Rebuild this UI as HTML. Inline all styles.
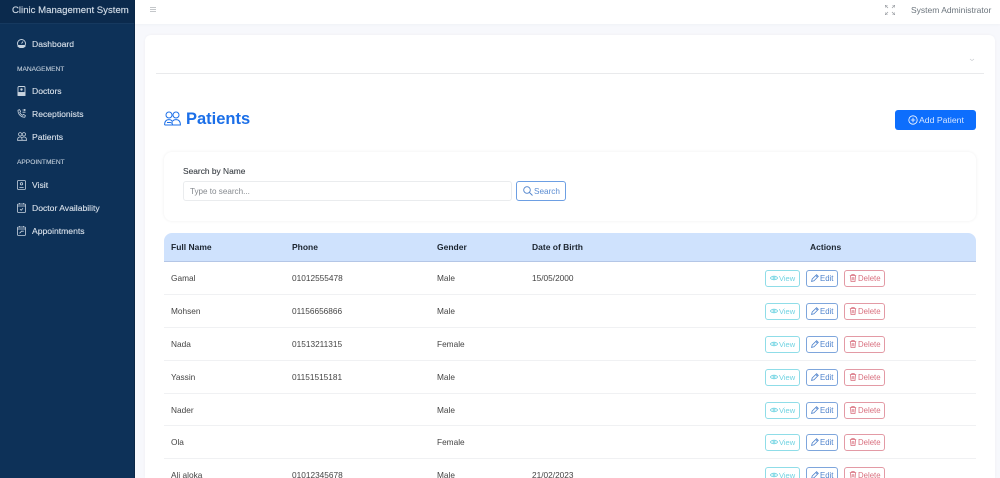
<!DOCTYPE html>
<html style="width:1000px;height:478px;overflow:hidden"><head><meta charset="utf-8"><style>
*{box-sizing:border-box}
html,body{margin:0;padding:0}
body{width:1000px;height:478px;overflow:hidden;position:relative;background:#f7f8fc;font-family:"Liberation Sans",sans-serif;font-size:9px;color:#333}
.a{position:absolute;white-space:nowrap}
.nav{color:#dbe3ec;font-size:8.6px;line-height:12px;left:32px;-webkit-text-stroke:.1px #dbe3ec}
.sec{color:#c4d0dc;font-size:6.6px;line-height:10px;left:17px;-webkit-text-stroke:.1px #c4d0dc}
svg{position:absolute;fill:none}
.td{line-height:12px;color:#444;font-size:8.3px}
.th{line-height:12px;color:#1c2530;font-weight:bold;font-size:8.5px}
.btn{position:absolute;height:17px;border:1px solid;border-radius:3px;font-size:7.8px;line-height:15px;background:#fff;white-space:nowrap}
.btn span{position:absolute;top:0}
.v{left:765px;width:35px;border-color:#8fdde8;color:#6fd3e2;font-size:7.5px}
.e{left:806px;width:32px;border-color:#7ea6dc;color:#4f83cc}
.d{left:844px;width:41px;border-color:#e39aa5;color:#d9707f}
.line{position:absolute;left:164px;width:812px;height:1px;background:#f0f1f3}
</style></head><body>
<div class="a" style="left:0;top:0;width:135px;height:478px;background:#0d3158;border-right:1px solid #0a2747"></div>
<div class="a" style="left:0;top:0;width:134px;height:24px;background:#0b2a4d;border-bottom:1px solid #16395f"></div>
<div class="a" style="left:12px;top:4px;line-height:13px;font-size:9.6px;color:#d3dde8;-webkit-text-stroke:.15px #d3dde8">Clinic Management System</div>
<div class="a" style="left:135px;top:0;width:865px;height:24px;background:#fff;box-shadow:0 1px 3px rgba(0,0,0,.03)"></div>
<svg style="left:150px;top:7px" width="6" height="5" stroke="#c4c7ca" stroke-width="1"><path d="M0 .5H6M0 2.5H6M0 4.5H6"/></svg>
<svg style="left:885px;top:5px" width="10" height="10" stroke="#9ca0a5" stroke-width=".8"><path d="M0 3V0H3M7 0H10V3M10 7V10H7M3 10H0V7M0 0L3 3M10 0L7 3M10 10L7 7M0 10L3 7"/></svg>
<div class="a" style="left:911px;top:4px;line-height:12px;font-size:8.5px;color:#6c757d">System Administrator</div>

<svg style="left:17px;top:39px" width="9" height="9" stroke="#c9d4df" stroke-width=".9"><circle cx="4.5" cy="4.5" r="4"/><path d="M1 6.5H8V7.5L6 8.6H3L1 7.5Z" fill="#c9d4df"/><path d="M4.5 4.5L6 2.5"/></svg>
<div class="a nav" style="top:38px">Dashboard</div>
<div class="a sec" style="top:66px;margin-top:-2px;transform:translateY(1px)">MANAGEMENT</div>
<svg style="left:17px;top:86px" width="9" height="10" stroke="#c9d4df" stroke-width=".9"><rect x="1" y=".5" width="7" height="9" rx="1"/><rect x="1" y="6.5" width="7" height="3" fill="#c9d4df"/><circle cx="4.5" cy="3.5" r="1.2" fill="#c9d4df" stroke="none"/></svg>
<div class="a nav" style="top:85px">Doctors</div>
<svg style="left:17px;top:109px" width="9" height="9" stroke="#c9d4df" stroke-width=".8"><path d="M1 1.2L2.5.6L3.6 2.4L2.8 3.4C3.3 4.8 4.3 5.8 5.6 6.3L6.6 5.4L8.4 6.6L7.8 8.2C4 8.4.8 5 1 1.2ZM5.5 1H8.5M7 .2L8.5 1L7 1.8M8.5 3.2H5.5"/></svg>
<div class="a nav" style="top:108px">Receptionists</div>
<svg style="left:17px;top:132px" width="10" height="9" stroke="#c9d4df" stroke-width=".8"><circle cx="3.2" cy="2.3" r="1.7"/><circle cx="6.9" cy="2.3" r="1.7"/><path d="M.5 8.3C.5 5.5 2 5 3.2 5C4.4 5 5.1 5.6 5.1 8.3ZM5.1 8.3H9.6C9.6 5.5 8.1 5 6.9 5C6.2 5 5.6 5.2 5.2 5.8"/></svg>
<div class="a nav" style="top:131px">Patients</div>
<div class="a sec" style="top:158px">APPOINTMENT</div>
<svg style="left:17px;top:180px" width="9" height="10" stroke="#c9d4df" stroke-width=".8"><rect x=".5" y=".5" width="8" height="9" rx="1"/><circle cx="4.5" cy="3.8" r="1.2"/><path d="M2.4 7.4H6.6"/></svg>
<div class="a nav" style="top:179px">Visit</div>
<svg style="left:17px;top:203px" width="9" height="10" stroke="#c9d4df" stroke-width=".8"><rect x=".5" y="1" width="8" height="8.5" rx="1"/><path d="M.5 3H8.5M2.4 0V1.5M6.6 0V1.5M3 6.2L4.2 7.3L6 5.2"/></svg>
<div class="a nav" style="top:202px">Doctor Availability</div>
<svg style="left:17px;top:226px" width="9" height="10" stroke="#c9d4df" stroke-width=".8"><rect x=".5" y="1" width="8" height="8.5" rx="1"/><path d="M.5 3H8.5M2.4 0V1.5M6.6 0V1.5M2.5 7.3L4.5 5.2H6.8"/></svg>
<div class="a nav" style="top:225px">Appointments</div>

<div class="a" style="left:145px;top:35px;width:850px;height:443px;background:#fff;border-radius:6px 6px 0 0;box-shadow:0 0 3px rgba(0,0,0,.04)"></div>
<div class="a" style="left:156px;top:73px;width:828px;height:1px;background:#e9eaec"></div>
<svg style="left:969px;top:58px" width="6" height="4" stroke="#c8cbcf" stroke-width=".7"><path d="M1 1L3 2.6L5 1"/></svg>

<svg style="left:164px;top:111px" width="17" height="15" stroke="#1b6fe8" stroke-width="1"><circle cx="5" cy="4" r="3"/><circle cx="12" cy="4" r="3"/><path d="M.6 14C.6 10 2.6 8.6 5 8.6C7 8.6 8.3 9.6 8.5 11.5M8.5 14H16.4C16.4 10 14.4 8.6 12 8.6C10.5 8.6 9.5 9.1 8.8 10M.6 14H8.5C8.5 12.5 7.5 11.5 6 11.5H3"/></svg>
<div class="a" style="left:186px;top:109px;font-size:16.5px;line-height:20px;font-weight:bold;color:#1b6fe8">Patients</div>
<div class="a" style="left:895px;top:110px;width:81px;height:20px;background:#0d6efd;border-radius:3px"></div>
<svg style="left:908px;top:115px" width="10" height="10" stroke="#fff" stroke-width=".8"><circle cx="5" cy="5" r="4.2"/><path d="M5 2.8V7.2M2.8 5H7.2"/></svg>
<div class="a" style="left:919px;top:114px;line-height:12px;font-size:8.7px;color:#d6e6ff">Add Patient</div>

<div class="a" style="left:164px;top:152px;width:812px;height:69px;background:#fff;border-radius:8px;box-shadow:0 0 3px rgba(0,0,0,.07)"></div>
<div class="a" style="left:183px;top:165px;line-height:12px;font-size:8.4px;color:#3a3f45;-webkit-text-stroke:.1px #3a3f45">Search by Name</div>
<div class="a" style="left:183px;top:181px;width:329px;height:20px;border:1px solid #eaecee;border-radius:3px;background:#fff"></div>
<div class="a" style="left:190px;top:186px;line-height:12px;font-size:8.1px;color:#85898e">Type to search...</div>
<div class="a" style="left:516px;top:181px;width:50px;height:20px;border:1px solid #6d9fe3;border-radius:3px;background:#fff"></div>
<svg style="left:523px;top:186px" width="10" height="10" stroke="#4f83cc" stroke-width=".9"><circle cx="4" cy="4" r="3.3"/><path d="M6.5 6.5L9.5 9.5"/></svg>
<div class="a" style="left:534px;top:186px;line-height:12px;font-size:8.2px;color:#5a8cd2">Search</div>

<div class="a" style="left:164px;top:233px;width:812px;height:29px;background:#cfe2fd;border-radius:8px 8px 0 0;border-bottom:1px solid #b4c6e6"></div>
<div class="a th" style="left:171px;top:241px">Full Name</div>
<div class="a th" style="left:292px;top:241px">Phone</div>
<div class="a th" style="left:437px;top:241px">Gender</div>
<div class="a th" style="left:532px;top:241px">Date of Birth</div>
<div class="a th" style="left:810px;top:241px">Actions</div>

<div class="line" style="top:294px"></div><div class="line" style="top:327px"></div><div class="line" style="top:360px"></div><div class="line" style="top:393px"></div><div class="line" style="top:425px"></div><div class="line" style="top:458px"></div>

<div class="a td" style="left:171px;top:272px">Gamal</div><div class="a td" style="left:292px;top:272px">01012555478</div><div class="a td" style="left:437px;top:272px">Male</div><div class="a td" style="left:532px;top:272px">15/05/2000</div>
<div class="a td" style="left:171px;top:305px">Mohsen</div><div class="a td" style="left:292px;top:305px">01156656866</div><div class="a td" style="left:437px;top:305px">Male</div>
<div class="a td" style="left:171px;top:338px">Nada</div><div class="a td" style="left:292px;top:338px">01513211315</div><div class="a td" style="left:437px;top:338px">Female</div>
<div class="a td" style="left:171px;top:371px">Yassin</div><div class="a td" style="left:292px;top:371px">01151515181</div><div class="a td" style="left:437px;top:371px">Male</div>
<div class="a td" style="left:171px;top:404px">Nader</div><div class="a td" style="left:437px;top:404px">Male</div>
<div class="a td" style="left:171px;top:436px">Ola</div><div class="a td" style="left:437px;top:436px">Female</div>
<div class="a td" style="left:171px;top:469px">Ali aloka</div><div class="a td" style="left:292px;top:469px">01012345678</div><div class="a td" style="left:437px;top:469px">Male</div><div class="a td" style="left:532px;top:469px">21/02/2023</div>

<div class="btn v" style="top:270px"><svg width="8" height="8" style="left:4px;top:3px" stroke="#6fd3e2" stroke-width=".8"><path d="M.3 4C2 1.6 6 1.6 7.7 4C6 6.4 2 6.4 .3 4Z"/><circle cx="4" cy="4" r="1"/></svg><span style="left:13px">View</span></div>
<div class="btn e" style="top:270px"><svg width="8" height="8" style="left:4px;top:3px" stroke="#4f83cc" stroke-width=".8"><path d="M.6 7.4L1.2 5L5.6 .7L7.3 2.4L3 6.8ZM4.8 1.5L6.5 3.2"/></svg><span style="left:13px">Edit</span></div>
<div class="btn d" style="top:270px"><svg width="8" height="8" style="left:4px;top:3px" stroke="#d9707f" stroke-width=".8"><path d="M.8 1.6H7.2M2.8 1.6V.5H5.2V1.6M1.5 1.6L2 7.5H6L6.5 1.6M3.2 3V6.2M4.8 3V6.2"/></svg><span style="left:13px">Delete</span></div>

<div class="btn v" style="top:303px"><svg width="8" height="8" style="left:4px;top:3px" stroke="#6fd3e2" stroke-width=".8"><path d="M.3 4C2 1.6 6 1.6 7.7 4C6 6.4 2 6.4 .3 4Z"/><circle cx="4" cy="4" r="1"/></svg><span style="left:13px">View</span></div>
<div class="btn e" style="top:303px"><svg width="8" height="8" style="left:4px;top:3px" stroke="#4f83cc" stroke-width=".8"><path d="M.6 7.4L1.2 5L5.6 .7L7.3 2.4L3 6.8ZM4.8 1.5L6.5 3.2"/></svg><span style="left:13px">Edit</span></div>
<div class="btn d" style="top:303px"><svg width="8" height="8" style="left:4px;top:3px" stroke="#d9707f" stroke-width=".8"><path d="M.8 1.6H7.2M2.8 1.6V.5H5.2V1.6M1.5 1.6L2 7.5H6L6.5 1.6M3.2 3V6.2M4.8 3V6.2"/></svg><span style="left:13px">Delete</span></div>

<div class="btn v" style="top:336px"><svg width="8" height="8" style="left:4px;top:3px" stroke="#6fd3e2" stroke-width=".8"><path d="M.3 4C2 1.6 6 1.6 7.7 4C6 6.4 2 6.4 .3 4Z"/><circle cx="4" cy="4" r="1"/></svg><span style="left:13px">View</span></div>
<div class="btn e" style="top:336px"><svg width="8" height="8" style="left:4px;top:3px" stroke="#4f83cc" stroke-width=".8"><path d="M.6 7.4L1.2 5L5.6 .7L7.3 2.4L3 6.8ZM4.8 1.5L6.5 3.2"/></svg><span style="left:13px">Edit</span></div>
<div class="btn d" style="top:336px"><svg width="8" height="8" style="left:4px;top:3px" stroke="#d9707f" stroke-width=".8"><path d="M.8 1.6H7.2M2.8 1.6V.5H5.2V1.6M1.5 1.6L2 7.5H6L6.5 1.6M3.2 3V6.2M4.8 3V6.2"/></svg><span style="left:13px">Delete</span></div>

<div class="btn v" style="top:369px"><svg width="8" height="8" style="left:4px;top:3px" stroke="#6fd3e2" stroke-width=".8"><path d="M.3 4C2 1.6 6 1.6 7.7 4C6 6.4 2 6.4 .3 4Z"/><circle cx="4" cy="4" r="1"/></svg><span style="left:13px">View</span></div>
<div class="btn e" style="top:369px"><svg width="8" height="8" style="left:4px;top:3px" stroke="#4f83cc" stroke-width=".8"><path d="M.6 7.4L1.2 5L5.6 .7L7.3 2.4L3 6.8ZM4.8 1.5L6.5 3.2"/></svg><span style="left:13px">Edit</span></div>
<div class="btn d" style="top:369px"><svg width="8" height="8" style="left:4px;top:3px" stroke="#d9707f" stroke-width=".8"><path d="M.8 1.6H7.2M2.8 1.6V.5H5.2V1.6M1.5 1.6L2 7.5H6L6.5 1.6M3.2 3V6.2M4.8 3V6.2"/></svg><span style="left:13px">Delete</span></div>

<div class="btn v" style="top:402px"><svg width="8" height="8" style="left:4px;top:3px" stroke="#6fd3e2" stroke-width=".8"><path d="M.3 4C2 1.6 6 1.6 7.7 4C6 6.4 2 6.4 .3 4Z"/><circle cx="4" cy="4" r="1"/></svg><span style="left:13px">View</span></div>
<div class="btn e" style="top:402px"><svg width="8" height="8" style="left:4px;top:3px" stroke="#4f83cc" stroke-width=".8"><path d="M.6 7.4L1.2 5L5.6 .7L7.3 2.4L3 6.8ZM4.8 1.5L6.5 3.2"/></svg><span style="left:13px">Edit</span></div>
<div class="btn d" style="top:402px"><svg width="8" height="8" style="left:4px;top:3px" stroke="#d9707f" stroke-width=".8"><path d="M.8 1.6H7.2M2.8 1.6V.5H5.2V1.6M1.5 1.6L2 7.5H6L6.5 1.6M3.2 3V6.2M4.8 3V6.2"/></svg><span style="left:13px">Delete</span></div>

<div class="btn v" style="top:434px"><svg width="8" height="8" style="left:4px;top:3px" stroke="#6fd3e2" stroke-width=".8"><path d="M.3 4C2 1.6 6 1.6 7.7 4C6 6.4 2 6.4 .3 4Z"/><circle cx="4" cy="4" r="1"/></svg><span style="left:13px">View</span></div>
<div class="btn e" style="top:434px"><svg width="8" height="8" style="left:4px;top:3px" stroke="#4f83cc" stroke-width=".8"><path d="M.6 7.4L1.2 5L5.6 .7L7.3 2.4L3 6.8ZM4.8 1.5L6.5 3.2"/></svg><span style="left:13px">Edit</span></div>
<div class="btn d" style="top:434px"><svg width="8" height="8" style="left:4px;top:3px" stroke="#d9707f" stroke-width=".8"><path d="M.8 1.6H7.2M2.8 1.6V.5H5.2V1.6M1.5 1.6L2 7.5H6L6.5 1.6M3.2 3V6.2M4.8 3V6.2"/></svg><span style="left:13px">Delete</span></div>

<div class="btn v" style="top:467px"><svg width="8" height="8" style="left:4px;top:3px" stroke="#6fd3e2" stroke-width=".8"><path d="M.3 4C2 1.6 6 1.6 7.7 4C6 6.4 2 6.4 .3 4Z"/><circle cx="4" cy="4" r="1"/></svg><span style="left:13px">View</span></div>
<div class="btn e" style="top:467px"><svg width="8" height="8" style="left:4px;top:3px" stroke="#4f83cc" stroke-width=".8"><path d="M.6 7.4L1.2 5L5.6 .7L7.3 2.4L3 6.8ZM4.8 1.5L6.5 3.2"/></svg><span style="left:13px">Edit</span></div>
<div class="btn d" style="top:467px"><svg width="8" height="8" style="left:4px;top:3px" stroke="#d9707f" stroke-width=".8"><path d="M.8 1.6H7.2M2.8 1.6V.5H5.2V1.6M1.5 1.6L2 7.5H6L6.5 1.6M3.2 3V6.2M4.8 3V6.2"/></svg><span style="left:13px">Delete</span></div>
</body></html>
